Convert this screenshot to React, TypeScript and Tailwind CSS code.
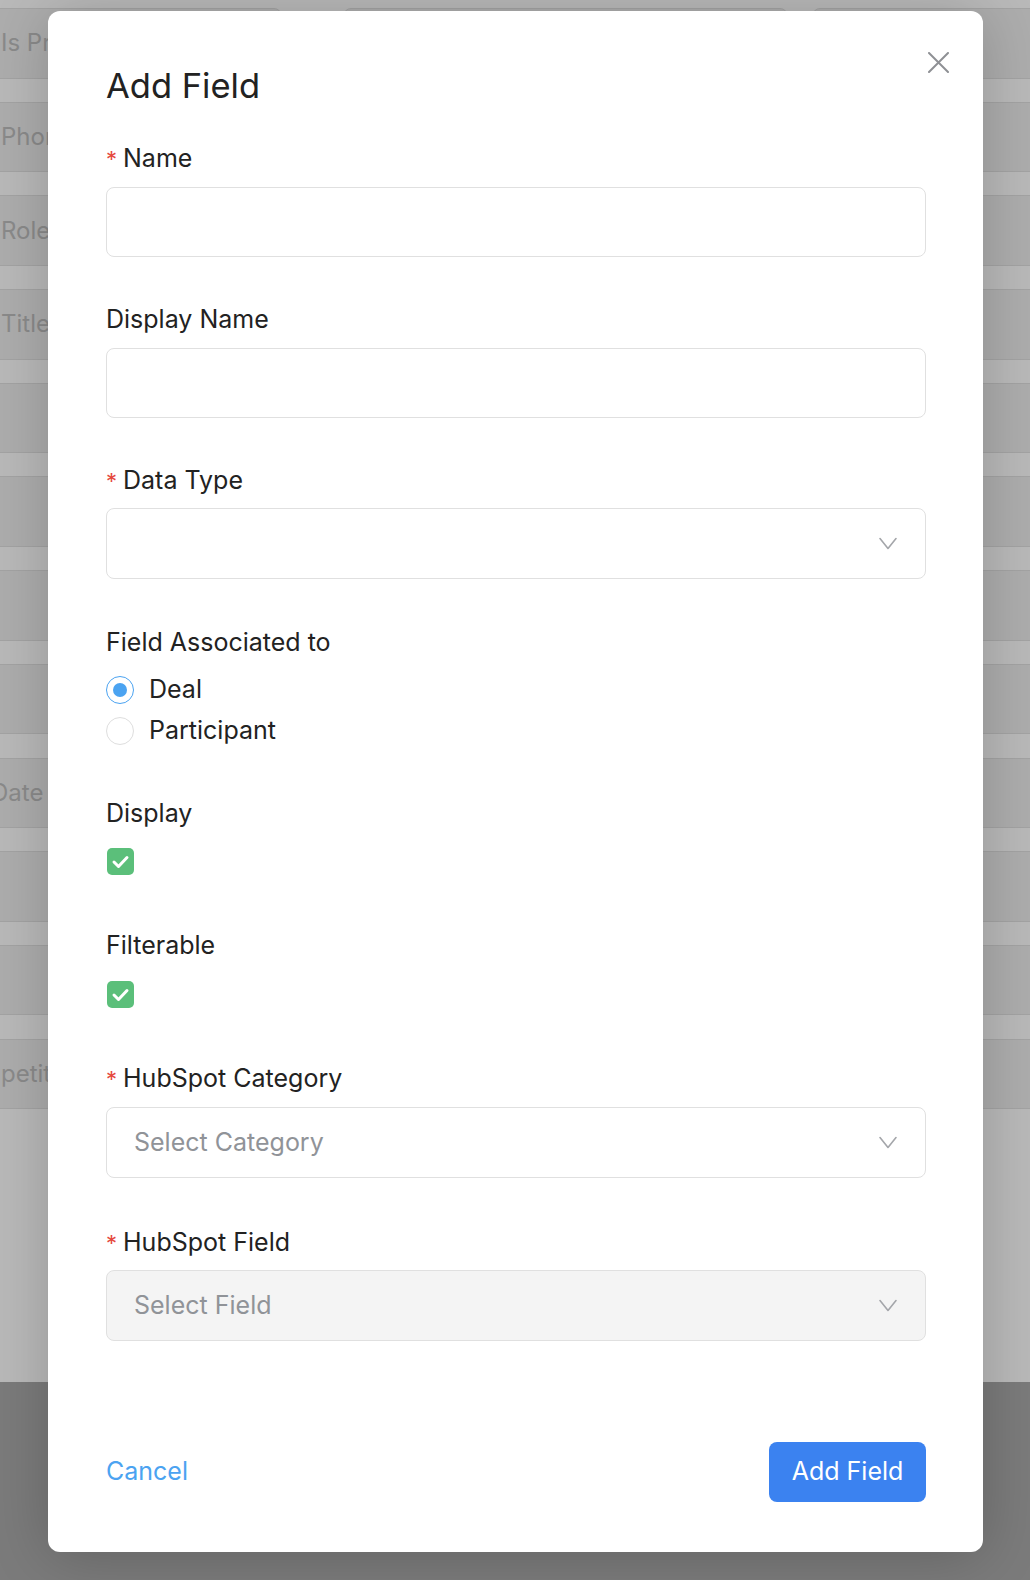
import React from 'react';

const rows = [
  { label: 'Is Primary', shift: 'ml-0' },
  { label: 'Phone', shift: 'ml-0' },
  { label: 'Role', shift: 'ml-0' },
  { label: 'Title', shift: 'ml-0' },
  { label: '', shift: 'ml-0' },
  { label: '', shift: 'ml-0' },
  { label: '', shift: 'ml-0' },
  { label: '', shift: 'ml-0' },
  { label: 'Date', shift: '-ml-[10px]' },
  { label: '', shift: 'ml-0' },
  { label: '', shift: 'ml-0' },
  { label: 'Competitor', shift: '-ml-[53px]' },
];

function Chevron() {
  return (
    <svg width="18" height="13" viewBox="0 0 18 13" fill="none" className="shrink-0">
      <path d="M1 1.5 9 11.5 17 1.5" stroke="#a4a6aa" strokeWidth="1.6" strokeLinecap="round" strokeLinejoin="round" />
    </svg>
  );
}

function Label({ children, required }: { children: React.ReactNode; required?: boolean }) {
  return (
    <div className="h-[36px] text-[25px] leading-[36px] text-[#222222] whitespace-nowrap">
      {required && <span className="text-[22px] text-[#e5483d] mr-[6px]">*</span>}
      {children}
    </div>
  );
}

function TextInput() {
  return <div className="h-[70px] rounded-[8px] border border-[#e0e0e0] bg-white" />;
}

function Select({ placeholder, disabled }: { placeholder?: string; disabled?: boolean }) {
  return (
    <div
      className={`h-[71px] rounded-[8px] border border-[#e0e0e0] flex items-center justify-between pl-[27px] pr-[28px] ${
        disabled ? 'bg-[#f4f4f4]' : 'bg-white'
      }`}
    >
      <span className="text-[25px] text-[#909398]">{placeholder}</span>
      <Chevron />
    </div>
  );
}

function Radio({ checked, label }: { checked?: boolean; label: string }) {
  return (
    <div className="h-[41px] flex items-center">
      <span
        className={`w-[28px] h-[28px] rounded-full flex items-center justify-center bg-white border-[1.5px] ${
          checked ? 'border-[#4ba3f1]' : 'border-[#dedede]'
        }`}
      >
        {checked && <span className="w-[14px] h-[14px] rounded-full bg-[#4ba3f1]" />}
      </span>
      <span className="ml-[15px] text-[25px] text-[#222222]">{label}</span>
    </div>
  );
}

function Checkbox() {
  return (
    <div className="h-[41px] flex items-center">
      <span className="ml-px w-[27px] h-[27px] rounded-[5px] bg-[#5bbf7a] flex items-center justify-center">
        <svg width="27" height="27" viewBox="0 0 27 27" fill="none">
          <path d="M7 14 11.5 18.5 20 9.5" stroke="white" strokeWidth="3" strokeLinecap="round" strokeLinejoin="round" />
        </svg>
      </span>
    </div>
  );
}

export default function App() {
  return (
    <div className="relative w-[1030px] h-[1580px] overflow-hidden bg-[#7b7b7b] font-[Inter,sans-serif]">
      {/* page behind the dialog */}
      <div className="h-[1382px] bg-[#b9b9b9] pt-[8px] flex flex-col gap-[23.2px]">
        {rows.map((row, i) => (
          <div key={i} className="h-[70.5px] flex">
            <div className="shrink-0 -ml-[20px] w-[302px] h-full rounded-r-[8px] border border-[#a3a3a3] bg-[#adadad] flex items-center pl-[20px] overflow-hidden">
              <span className={`text-[24px] text-[#8a8a8a] whitespace-nowrap ${row.shift}`}>{row.label}</span>
            </div>
            <div className="shrink-0 ml-[61px] w-[445px] h-full rounded-[8px] border border-[#a3a3a3] bg-[#adadad]" />
            <div className="shrink-0 ml-[24px] w-[240px] h-full rounded-l-[8px] border border-[#a3a3a3] bg-[#adadad]" />
          </div>
        ))}
      </div>

      {/* dialog */}
      <div className="absolute left-[48px] top-[11px] w-[935px] h-[1541px] rounded-[12px] bg-white shadow-[0_4px_60px_rgba(0,0,0,0.2)] pl-[58px] pr-[57px] pt-[53px] pb-[50px] flex flex-col">
        <button className="absolute right-[34px] top-[41px] w-[21px] h-[21px]">
          <svg width="21" height="21" viewBox="0 0 21 21" fill="none">
            <path d="M1 1 20 20M20 1 1 20" stroke="#8e9094" strokeWidth="2" strokeLinecap="round" />
          </svg>
        </button>

        <h2 className="text-[34.5px] leading-[44px] text-[#222222]">Add Field</h2>

        <div className="mt-[32px]">
          <Label required>Name</Label>
          <div className="mt-[11px]">
            <TextInput />
          </div>
        </div>

        <div className="mt-[44px]">
          <Label>Display Name</Label>
          <div className="mt-[11px]">
            <TextInput />
          </div>
        </div>

        <div className="mt-[44px]">
          <Label required>Data Type</Label>
          <div className="mt-[10px]">
            <Select />
          </div>
        </div>

        <div className="mt-[45px]">
          <Label>Field Associated to</Label>
          <div className="mt-[9px]">
            <Radio checked label="Deal" />
            <Radio label="Participant" />
          </div>
        </div>

        <div className="mt-[44px]">
          <Label>Display</Label>
          <div className="mt-[10px]">
            <Checkbox />
          </div>
        </div>

        <div className="mt-[45px]">
          <Label>Filterable</Label>
          <div className="mt-[11px]">
            <Checkbox />
          </div>
        </div>

        <div className="mt-[45px]">
          <Label required>HubSpot Category</Label>
          <div className="mt-[11px]">
            <Select placeholder="Select Category" />
          </div>
        </div>

        <div className="mt-[46px]">
          <Label required>HubSpot Field</Label>
          <div className="mt-[10px]">
            <Select placeholder="Select Field" disabled />
          </div>
        </div>

        <div className="mt-auto flex items-center justify-between">
          <button className="text-[25px] text-[#4ba3f1]">Cancel</button>
          <button className="w-[157px] h-[60px] rounded-[8px] bg-[#3b82f0] text-white text-[25px]">Add Field</button>
        </div>
      </div>
    </div>
  );
}
